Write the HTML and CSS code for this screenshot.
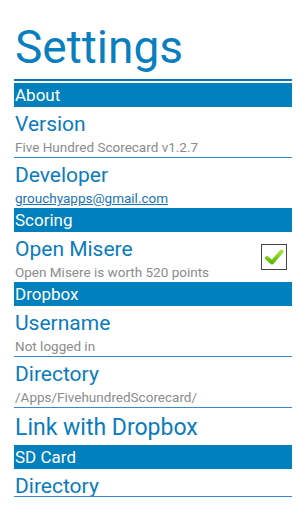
FILE: index.html
```html
<!DOCTYPE html>
<html lang="en">
  <head>
    <meta charset="UTF-8" />
    <meta name="viewport" content="width=device-width, initial-scale=1.0" />
    <title>Settings</title>
    <link rel="stylesheet" href="styles.css">
  </head>
  <body>
    <h1 class="title">Settings</h1>

    <div class="prefs">
      <div class="category">About</div>
      <div class="pref">
        <div class="pref-title">Version</div>
        <div class="pref-summary">Five Hundred Scorecard v1.2.7</div>
      </div>
      <div class="divider"></div>
      <div class="pref">
        <div class="pref-title">Developer</div>
        <a class="pref-link" href="mailto:grouchyapps@gmail.com">grouchyapps@gmail.com</a>
      </div>

      <div class="category">Scoring</div>
      <div class="pref pref-check">
        <div class="pref-text">
          <div class="pref-title">Open Misere</div>
          <div class="pref-summary">Open Misere is worth 520 points</div>
        </div>
        <div class="checkbox">
          <svg width="22" height="22" viewBox="0 0 22 22">
            <defs>
              <linearGradient id="tick" x1="0" y1="0" x2="0" y2="1">
                <stop offset="0" stop-color="#a6e23a" />
                <stop offset="1" stop-color="#5cb800" />
              </linearGradient>
            </defs>
            <path d="M4 12 L9 16.5 L18.5 5.5" fill="none" stroke="url(#tick)" stroke-width="4" stroke-linecap="round" stroke-linejoin="round" />
          </svg>
        </div>
      </div>

      <div class="category">Dropbox</div>
      <div class="pref">
        <div class="pref-title">Username</div>
        <div class="pref-summary">Not logged in</div>
      </div>
      <div class="divider"></div>
      <div class="pref">
        <div class="pref-title">Directory</div>
        <div class="pref-summary">/Apps/FivehundredScorecard/</div>
      </div>
      <div class="divider"></div>
      <div class="pref pref-single">
        <div class="pref-title">Link with Dropbox</div>
      </div>

      <div class="category">SD Card</div>
      <div class="pref pref-cut">
        <div class="pref-title">Directory</div>
      </div>
      <div class="divider"></div>
    </div>
  </body>
</html>
```

FILE: styles.css
```css
body {
  font-family: Roboto, "Noto Sans", sans-serif;
  margin: 0;
  padding: 0 14px;
  background-color: #fff;
}
.title {
  margin: 0 0 2px 0;
  padding: 19px 0 4px 1px;
  font-size: 46px;
  font-weight: normal;
  line-height: 56px;
  color: #0a7fc0;
  border-bottom: 2px solid #0a74b8;
}
.category {
  height: 24px;
  box-sizing: border-box;
  padding: 1px 0 0 1px;
  font-size: 17px;
  line-height: 23px;
  color: #fff;
  background-color: #0080bc;
}
.pref {
  height: 50px;
  box-sizing: border-box;
  padding: 4px 0 1px 1px;
}
.pref-title {
  font-size: 21px;
  line-height: 27px;
  color: #0a7bbd;
}
.pref-summary {
  font-size: 13.5px;
  line-height: 18px;
  color: #8c8c8c;
}
.pref-link {
  display: block;
  font-size: 13.5px;
  line-height: 18px;
  color: #1a72b8;
}
.pref-check {
  display: flex;
  align-items: center;
  padding-top: 0;
  padding-bottom: 0;
}
.pref-text {
  flex: 1;
  padding-top: 3px;
}
.checkbox {
  width: 24px;
  height: 24px;
  margin-right: 5px;
  border: 1px solid #444;
  background-color: #fff;
  display: flex;
  align-items: center;
  justify-content: center;
}
.pref-single {
  height: 37px;
  padding-top: 6px;
}
.pref-single .pref-title {
  font-size: 23px;
}
.pref-cut {
  height: 27px;
  overflow: hidden;
}
.divider {
  height: 1px;
  background-color: #3b87c9;
}
```
